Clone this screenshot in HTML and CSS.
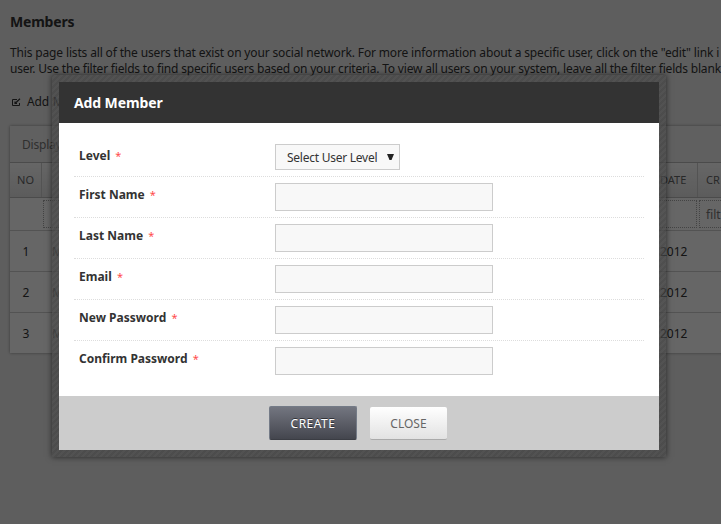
FILE: index.html
```html
<!DOCTYPE html>
<html lang="en">
<head>
<meta charset="utf-8">
<title>Members</title>
<link rel="stylesheet" href="styles.css">
</head>
<body>
<main class="page">
  <h1>Members</h1>
  <p class="intro"><span class="line1">This page lists all of the users that exist on your social network. For more information about a specific user, click on the "edit" link i</span><br><span class="line2">user. Use the filter fields to find specific users based on your criteria. To view all users on your system, leave all the filter fields blank</span></p>
  <a class="add"><svg width="9" height="9" viewBox="0 0 9 9" fill="none" stroke="#333"><path d="M5 1.5H.5V7.5H7.5V5"/><path d="M3 5.5L8 .8M3 3.5V5.5H5" stroke-width="1.2"/></svg><span>Add M</span></a>
  <section class="grid">
    <div class="display">Display</div>
    <div class="row head"><div class="no">NO</div><div class="name"></div><div class="date">DATE</div><div class="created">CR</div></div>
    <div class="row filter"><div class="no"></div><div class="name"><i></i></div><div class="date"><i></i></div><div class="created"><i>filt</i></div></div>
    <div class="row"><div class="no">1</div><div class="name">M</div><div class="date">2012</div><div class="created">1</div></div>
    <div class="row"><div class="no">2</div><div class="name">M</div><div class="date">2012</div><div class="created">1</div></div>
    <div class="row"><div class="no">3</div><div class="name">M</div><div class="date">2012</div><div class="created">1</div></div>
  </section>
</main>
<div class="overlay">
  <div class="frame">
    <div class="modal">
      <header><span>Add Member</span></header>
      <form>
        <div class="field first"><label>Level <b>*</b></label><div class="select"><span>Select User Level</span><svg width="7" height="7" viewBox="0 0 7 7"><path d="M0 0H7L4.5 6H2.5Z" fill="#222"/></svg></div></div>
        <div class="field"><label>First Name <b>*</b></label><input type="text"></div>
        <div class="field"><label>Last Name <b>*</b></label><input type="text"></div>
        <div class="field"><label>Email <b>*</b></label><input type="text"></div>
        <div class="field"><label>New Password <b>*</b></label><input type="password"></div>
        <div class="field"><label>Confirm Password <b>*</b></label><input type="password"></div>
      </form>
      <footer><button class="create" type="button">CREATE</button><button class="close" type="button">CLOSE</button></footer>
    </div>
  </div>
</div>
</body>
</html>
```
FILE: styles.css
```css
* { box-sizing: border-box; }
body { margin: 0; height: 524px; overflow: hidden; background: #ebebeb; color: #333; font: 12px/16px "Noto Sans", sans-serif; }
.page { width: 721px; overflow: hidden; padding: 13px 0 8px 10px; }
h1 { margin: 0; font-size: 14px; line-height: 18px; font-weight: 700; letter-spacing: -.2px; }
.intro { margin: 14px 0 0; white-space: nowrap; }
.line1 { letter-spacing: -.15px; }
.line2 { letter-spacing: -.19px; }
.add { display: flex; align-items: center; gap: 6px; height: 16px; margin: 17px 0 16px; padding-left: 2px; word-spacing: 1px; letter-spacing: -.2px; }
.grid { width: 850px; background: #fff; box-shadow: 0 0 3px rgba(0,0,0,.4); }
.display { height: 36px; padding: 0 12px; line-height: 37px; background: #f0f0f0; color: #777; letter-spacing: -.2px; }
.row { display: grid; grid-template-columns: 32px 610px 46px 1fr; height: 41px; line-height: 41px; border-top: 1px solid #d0d0d0; }
.no { text-align: center; }
.name { padding-left: 10px; color: #777; }
.date { padding-left: 8px; }
.created { padding-left: 22px; }
.head { height: 35px; line-height: 34px; font-size: 11px; color: #666; background: linear-gradient(#fff, #e6e6e6); border-color: #bbb; }
.head > div { border-right: 1px solid #d0d0d0; }
.head .created { padding-left: 8px; }
.filter { height: 33px; border-color: #bbb; line-height: 28px; color: #777; }
.filter > .name, .filter > .date, .filter > .created { padding: 2px 1px; }
.filter i { display: block; height: 28px; border: 1px dotted #aaa; padding-left: 6px; font-style: normal; }
.overlay { position: absolute; inset: 0; padding: 75px 0 0 52px; background: rgba(0,0,0,.6); }
.frame { width: 614px; height: 382px; padding: 7px; box-shadow: 0 0 6px rgba(0,0,0,.6); background: repeating-linear-gradient(135deg, rgba(68,68,68,.68) 0 2.12px, rgba(76,76,76,.68) 2.12px 4.24px); }
.modal { width: 600px; height: 368px; background: #fff; }
header { height: 41px; padding-left: 15px; background: #333; color: #fff; font-size: 14px; line-height: 41px; font-weight: 700; letter-spacing: -.1px; }
form { height: 273px; padding: 15px 15px 0; }
.field { display: flex; height: 41px; padding: 6px 0 0 5px; border-bottom: 1px dotted #ddd; }
.field:last-child { border: 0; }
.first { height: 39px; }
label { width: 196px; font-weight: 700; line-height: 24px; }
label b { margin-left: 2px; color: #ff4b4b; font-size: 11px; line-height: 1; font-weight: 400; }
input, .select { width: 218px; height: 28px; background: #f8f8f8; border: 1px solid #ccc; padding: 0; }
.select { display: flex; align-items: center; gap: 10px; width: 125px; height: 26px; padding-left: 11px; white-space: nowrap; letter-spacing: -.25px; }
.select span { padding-top: 1px; }
.select svg { flex: none; }
footer { display: flex; gap: 13px; height: 54px; padding: 10px 0 0 210px; background: #ccc; }
button { font: 12px/16px "Noto Sans", sans-serif; padding: 2px 0 0; border-radius: 2px; }
.create { width: 88px; height: 34px; color: #fff; border: 1px solid #747b87; border-bottom-color: #3b3d44; background: linear-gradient(#737680, #44464e); text-shadow: 0 -1px rgba(0,0,0,.5); letter-spacing: .5px; }
.close { width: 77px; height: 33px; margin-top: 1px; color: #666; border: 0; border-bottom: 1px solid #aaa; background: linear-gradient(#fff, #e2e2e2); }
```
